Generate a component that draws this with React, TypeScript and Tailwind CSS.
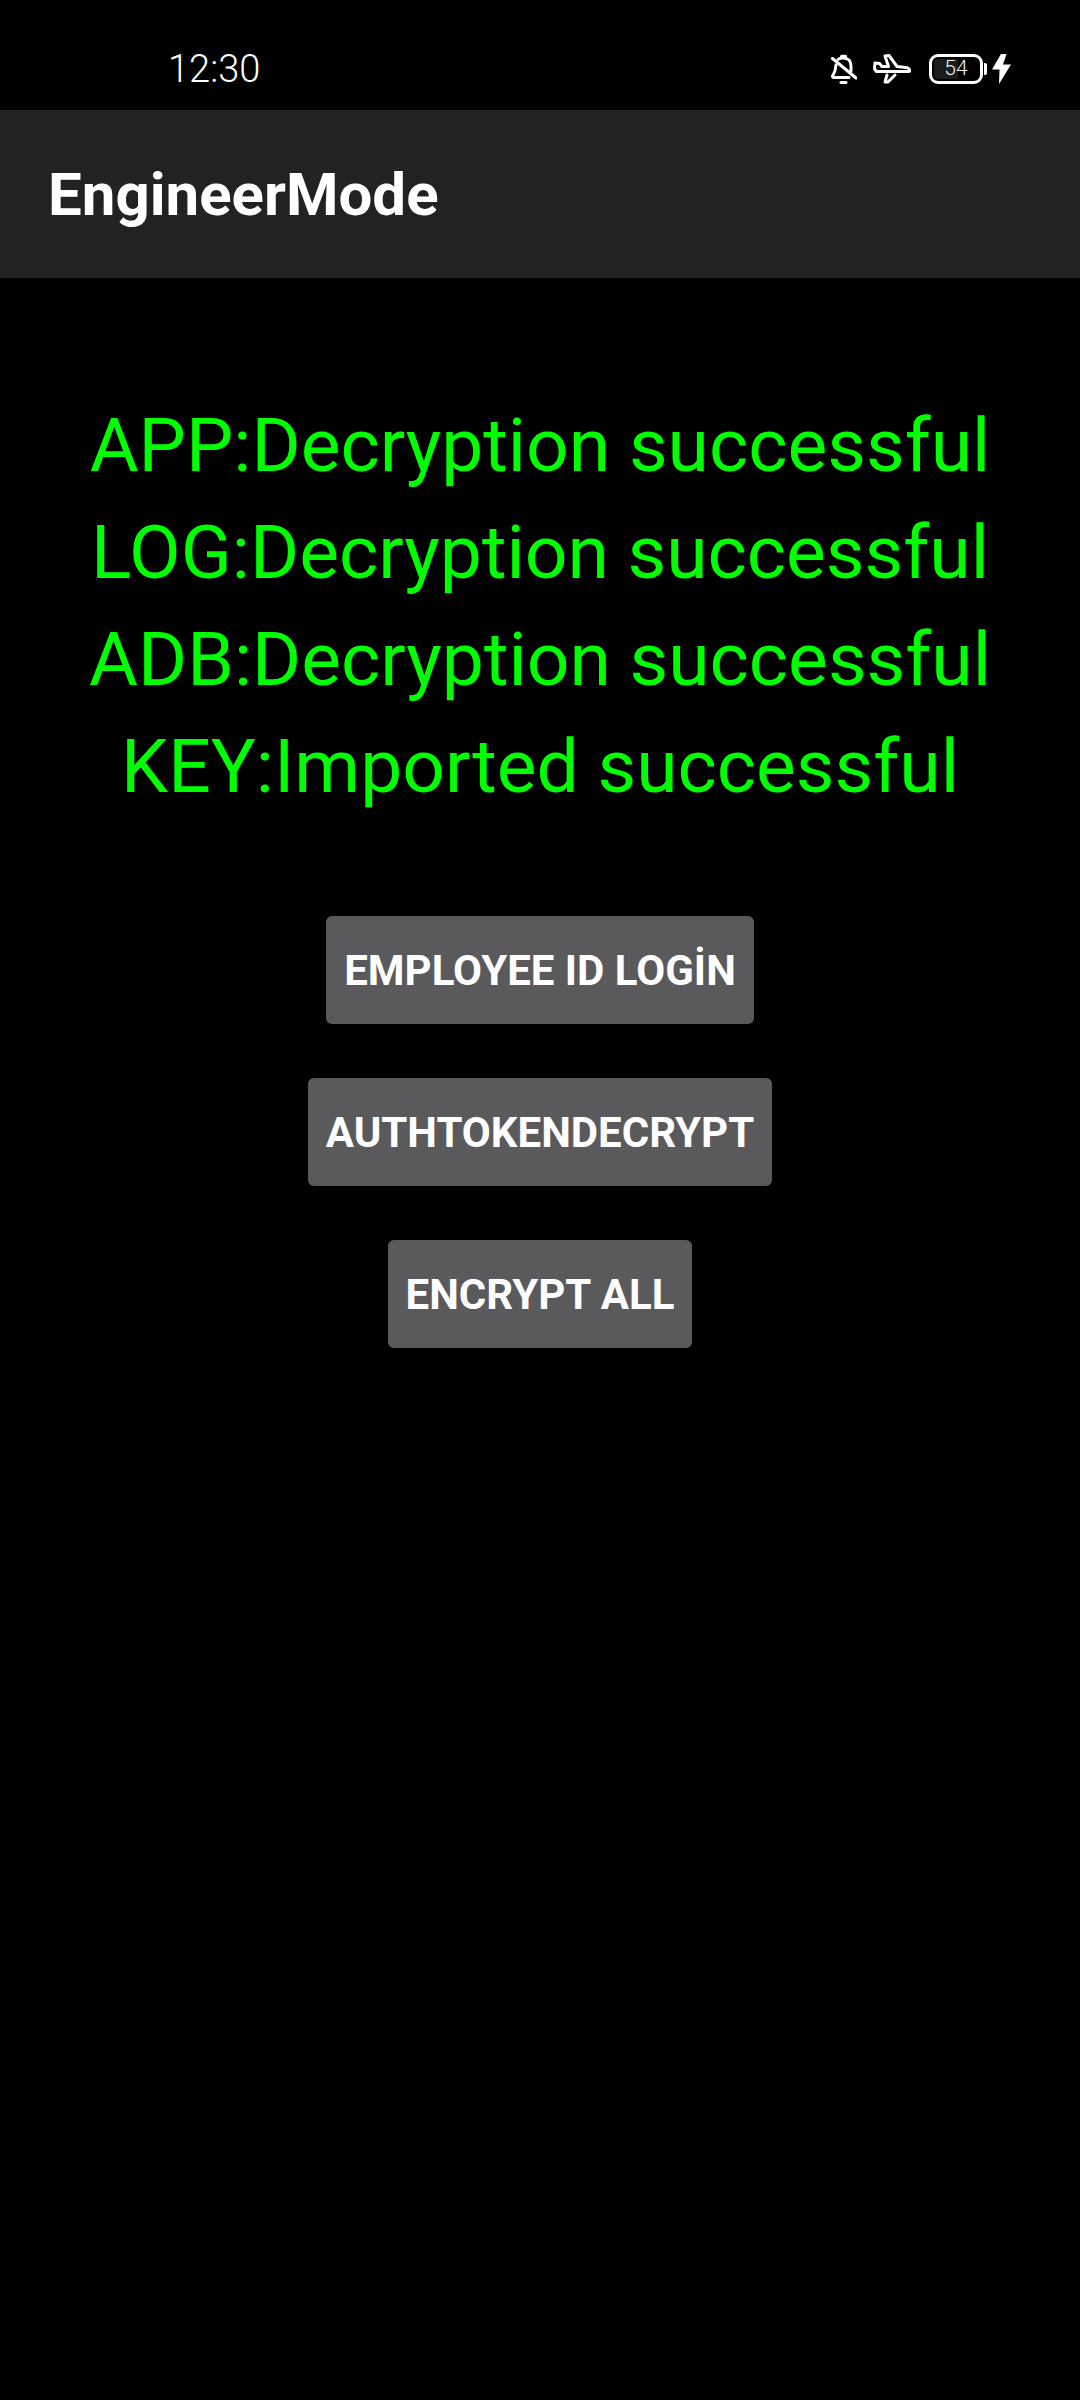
const statusLines = [
  'APP:Decryption successful',
  'LOG:Decryption successful',
  'ADB:Decryption successful',
  'KEY:Imported successful',
];

const actions = ['EMPLOYEE ID LOGİN', 'AUTHTOKENDECRYPT', 'ENCRYPT ALL'];

const BellOff = () => (
  <svg width="26" height="32" viewBox="0 0 26 32" fill="none" stroke="white" strokeWidth="3" strokeLinecap="round" strokeLinejoin="round">
    <path d="M10.5 3.2h4" />
    <path d="M7 6.5C9 4.6 15 4 18 7c2 2 2 5 2 8v3" />
    <path d="M5 12c-.3 4-.8 7-3.2 10.6-.6 1 0 1.9 1 1.9H18" />
    <path d="M1.5 5.5 25 25" />
    <path d="M10 29.5h5" />
  </svg>
);

const Plane = () => (
  <svg width="38" height="30" viewBox="0 0 38 30" fill="none" stroke="white" strokeWidth="3" strokeLinecap="round" strokeLinejoin="round">
    <path d="M2 9 6.5 9.5 9 12.5 15.5 12.5 12 2 16 1.5 24 12.5 33 13.5C36 14 37 15.5 36.5 17.5L3.5 17.5 1.5 15 2 9Z" />
    <path d="M14 21 12 28 15 28 22 21" />
  </svg>
);

const Battery = () => (
  <div className="flex items-center">
    <div className="w-[54px] h-[30px] rounded-[9px] border-[3px] border-white p-[2px] relative">
      <div className="h-full w-[54%] bg-[#1c1c1c] rounded-l-[4px]" />
      <span className="absolute inset-0 flex items-center justify-center text-[21px] font-light text-[#f0f0f0] font-['Roboto',sans-serif]">54</span>
    </div>
    <div className="w-[3px] h-[12px] bg-white rounded-r-[2px] ml-[1px]" />
  </div>
);

const Bolt = () => (
  <svg width="19" height="30" viewBox="0 0 19 30" fill="white">
    <path d="M9 0 0 15.5 7.5 15.5 7 30 19 10.5 11 10.5 14.5 0Z" />
  </svg>
);

const StatusBar = () => (
  <div className="h-[110px] bg-black flex items-center justify-between pl-[168px] pr-[69px] pt-[28px]">
    <span className="text-[38px] leading-none font-light text-white font-['Roboto',sans-serif]">12:30</span>
    <div className="flex items-center">
      <BellOff />
      <div className="w-[16px]" />
      <Plane />
      <div className="w-[18px]" />
      <Battery />
      <div className="w-[5px]" />
      <Bolt />
    </div>
  </div>
);

export default function App() {
  return (
    <div className="w-[1080px] h-[2400px] bg-black font-['Roboto',sans-serif]">
      <StatusBar />
      <div className="h-[168px] bg-[#222222] flex items-center pl-[48px] pt-[2px]">
        <h1 className="text-[60px] font-bold text-white leading-none">EngineerMode</h1>
      </div>
      <div className="flex flex-col items-center pt-[114px]">
        {statusLines.map(line => (
          <p key={line} className="text-[75px] leading-[107px] text-[#00ff00] whitespace-nowrap">
            {line}
          </p>
        ))}
        <div className="flex flex-col items-center gap-[54px] mt-[96px]">
          {actions.map(label => (
            <button key={label} className="h-[108px] px-[18px] bg-[#5a5a5c] rounded-[6px] text-[42px] font-bold text-white whitespace-nowrap">
              {label}
            </button>
          ))}
        </div>
      </div>
    </div>
  );
}
